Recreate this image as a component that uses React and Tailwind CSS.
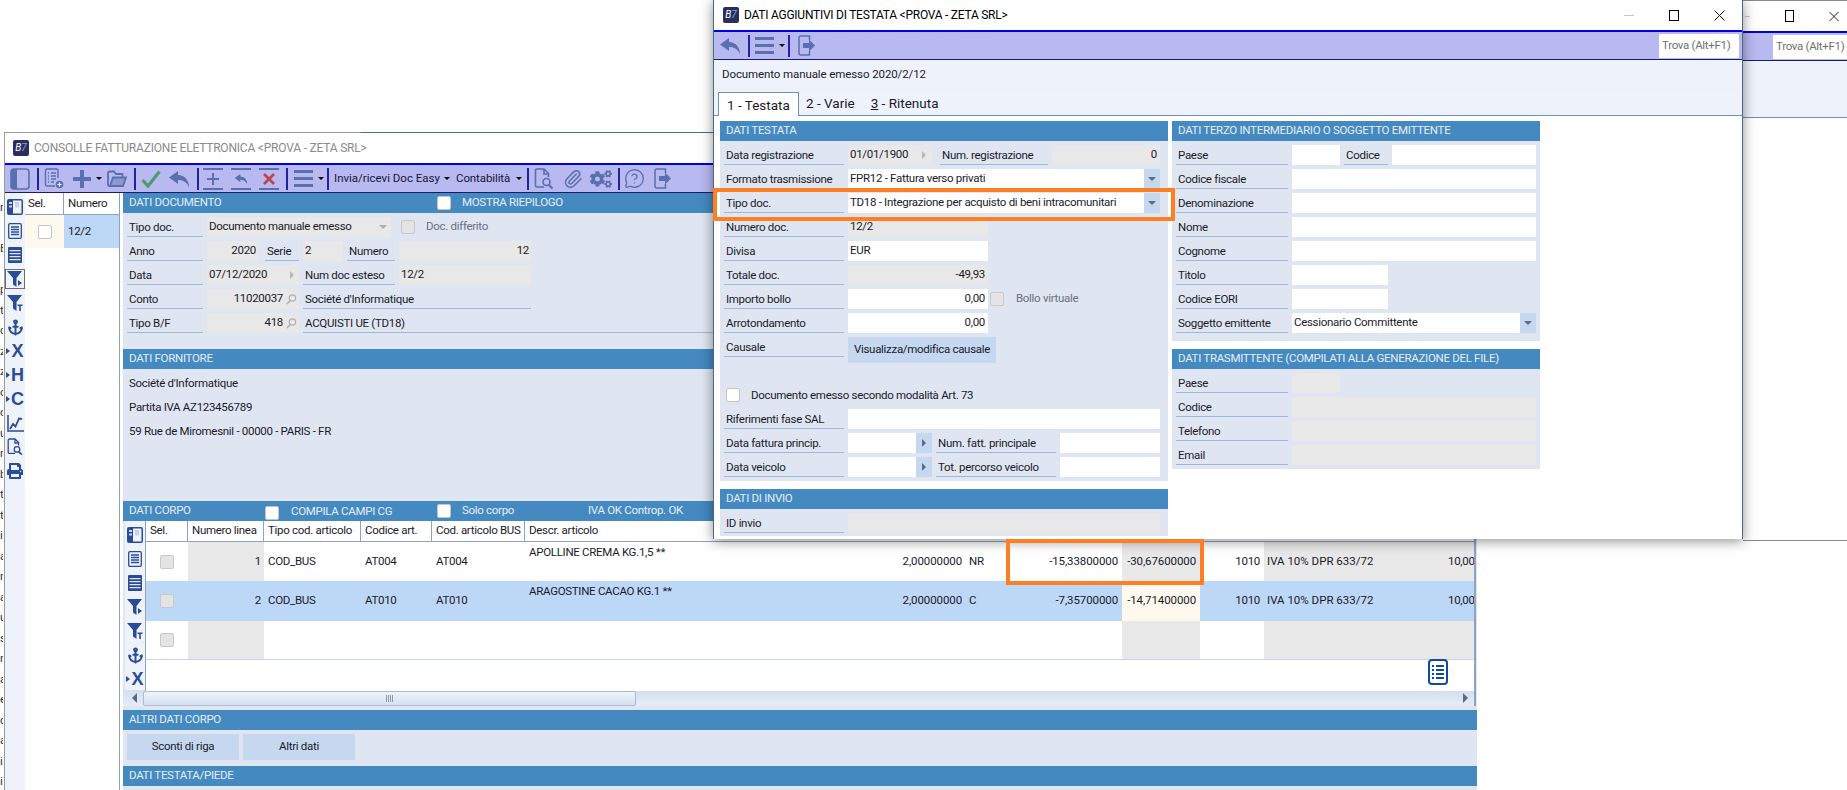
import { Anchor, MessageCircleQuestion, Paperclip } from "lucide-react";
import { FaCogs, FaPrint } from "react-icons/fa";

const leftBits = ["n", "", "E", "", "p", "ti", "c", "z", "z", "o", "c", "u", "n", "b", "t", "t", "i", "a", "n", "a", "u", "s", "n", "a", "e", "d", "a", "i", "i"];

// small icons -------------------------------------------------------------

function Logo() {
	return (
		<div className="flex h-4 w-4 items-center justify-center rounded-[2px] bg-[#2b2d5e] text-[10px] italic leading-none tracking-normal text-white">
			B<span className="text-[#5fb3e8]">7</span>
		</div>
	);
}

function Caret({ className = "" }) {
	return <span className={`block h-0 w-0 shrink-0 border-x-[3px] border-t-[3px] border-x-transparent border-t-black ${className}`} />;
}

function Sep({ className = "" }) {
	return <span className={`h-[22px] w-0.5 shrink-0 bg-[#2222a0] ${className}`} />;
}

function PanelIcon() {
	return (
		<svg viewBox="0 0 20 22" className="h-[22px] w-5" fill="#5a6fad">
			<rect x="1" y="1" width="18" height="20" rx="3" fill="none" stroke="#5a6fad" strokeWidth="1.6" />
			<path d="M3 1h4v20H3a2 2 0 0 1-2-2V3a2 2 0 0 1 2-2z" />
		</svg>
	);
}

function NewListIcon() {
	return (
		<svg viewBox="0 0 20 22" className="h-[22px] w-5" fill="none" stroke="#5a6fad" strokeWidth="1.4">
			<path d="M11 18H3a1.5 1.5 0 0 1-1.500-1.500V2.500A1.500 1.500 0 0 1 3 1h9.500A1.500 1.500 0 0 1 14 2.500V10" />
			<path d="M4 5h1M7 5h5M4 8h1M7 8h5M4 11h1M7 11h5M4 14h1M7 14h3" />
			<circle cx="15.500" cy="16.500" r="3.800" fill="#5a6fad" stroke="none" />
			<path d="M13.500 16.500h4M15.500 14.500v4" stroke="#fff" strokeWidth="1.200" />
		</svg>
	);
}

function PlusIcon() {
	return (
		<svg viewBox="0 0 18 18" className="h-[18px] w-[18px]" fill="#5a6fad">
			<path d="M7 0h4v7h7v4h-7v7H7v-7H0V7h7z" />
		</svg>
	);
}

function FolderIcon() {
	return (
		<svg viewBox="0 0 20 18" className="h-[18px] w-5" fill="none" stroke="#5a6fad" strokeWidth="1.800">
			<path d="M3 16H2.500A1.500 1.500 0 0 1 1 14.500V3a1.500 1.500 0 0 1 1.500-1.500h4.500L9 4h6.500V7" />
			<path d="M3 16 6 7.500h13L16 16z" fill="#5a6fad" fillOpacity="0.45" />
		</svg>
	);
}

function CheckIcon() {
	return (
		<svg viewBox="0 0 20 18" className="h-[18px] w-5" fill="none" stroke="#4d9a6e" strokeWidth="3.200">
			<path d="M1.500 10 7 16 18.500 1.500" />
		</svg>
	);
}

function UndoArrow({ className = "h-[16px] w-5", color = "#5a6fad" }) {
	return (
		<svg viewBox="0 0 20 16" className={className} fill={color}>
			<path d="M9 0 0 6.500 9 13V9c4.500 0 8 1.500 11 7C20 9 15.500 4 9 4z" />
		</svg>
	);
}

function BetweenLines({ children, className = "" }) {
	return (
		<div className={`flex h-[22px] w-5 shrink-0 flex-col justify-between ${className}`}>
			<span className="h-0.5 w-5 bg-[#5a6fad]" />
			<div className="flex items-center justify-center">{children}</div>
			<span className="h-0.5 w-5 bg-[#5a6fad]" />
		</div>
	);
}

function BurgerIcon({ className = "" }) {
	return (
		<div className={`flex h-[17px] w-[19px] shrink-0 flex-col justify-between ${className}`}>
			<span className="h-[3px] bg-[#5a6fad]" />
			<span className="h-[3px] bg-[#5a6fad]" />
			<span className="h-[3px] bg-[#5a6fad]" />
		</div>
	);
}

function DocSearchIcon({ color = "#5a6fad", className = "h-[22px] w-5" }) {
	return (
		<svg viewBox="0 0 20 22" className={className} fill="none" stroke={color} strokeWidth="1.600">
			<path d="M10 19H3a1.500 1.500 0 0 1-1.500-1.500V2.500A1.500 1.500 0 0 1 3 1h7l4.500 4.500V9" />
			<path d="M10 1v5h4.500" />
			<circle cx="12.500" cy="14" r="3.500" />
			<path d="m15 17 3.500 3.500" strokeWidth="2.200" />
		</svg>
	);
}

function ExitIcon({ className = "h-[21px] w-[18px]" }) {
	return (
		<svg viewBox="0 0 18 21" className={className} fill="none" stroke="#5a6fad" strokeWidth="1.500">
			<path d="M11.500 5V1H3A2 2 0 0 0 1 3v15a2 2 0 0 0 2 2h8.500v-4" />
			<path d="M5 8h6V4.500l6 6-6 6V13H5z" fill="#5a6fad" stroke="none" />
		</svg>
	);
}

function BookIcon() {
	return (
		<svg viewBox="0 0 16 16" className="h-4 w-4" fill="#2a4b97">
			<path d="M2 0h12a2 2 0 0 1 2 2v12a2 2 0 0 1-2 2H2a2 2 0 0 1-2-2V2a2 2 0 0 1 2-2zm4 1.500v13h8a.500.500 0 0 0 .500-.500V2a.500.500 0 0 0-.500-.500z" />
			<path d="M2 3h3v2H2zM2 6.500h3v2H2zM8 3h4v5.500H8z" fill="#c9d3ea" />
		</svg>
	);
}

function ListDocIcon() {
	return (
		<svg viewBox="0 0 14 16" className="h-4 w-[14px]" fill="none" stroke="#2a4b97" strokeWidth="1.300">
			<rect x="0.700" y="0.700" width="12.600" height="14.600" rx="1.200" />
			<path d="M3 4h8M3 6.500h8M3 9h8M3 11.500h8" />
		</svg>
	);
}

function TableIcon() {
	return (
		<svg viewBox="0 0 14 16" className="h-4 w-[14px]" fill="#2a4b97">
			<path d="M1 0h12a1 1 0 0 1 1 1v14a1 1 0 0 1-1 1H1a1 1 0 0 1-1-1V1a1 1 0 0 1 1-1z" />
			<path d="M1.500 3h11v1.300h-11zM1.500 6h11v1.300h-11zM1.500 9h11v1.300h-11zM1.500 12h11v1.300h-11z" fill="#dfe6f1" />
		</svg>
	);
}

function FilterIcon({ kind }) {
	return (
		<svg viewBox="0 0 16 16" className="h-4 w-4" fill="#2a4b97">
			<path d="M0 0h15L9.500 7v9L6 13.500V7z" />
			{kind === "arrow" ? <path d="m11 9 4 3-4 3z" /> : <path d="M10.500 9.500h5V11h-1.700v5h-1.600v-5h-1.700z" />}
		</svg>
	);
}

function PickLetter({ letter }) {
	return (
		<div className="flex items-center">
			<span className="mr-px h-0 w-0 border-y-[3px] border-l-[4px] border-y-transparent border-l-[#2a4b97]" />
			<span className="font-['Liberation_Sans'] text-[18px] font-bold leading-none tracking-normal text-[#2a4b97]">{letter}</span>
		</div>
	);
}

function ChartIcon() {
	return (
		<svg viewBox="0 0 17 17" className="h-[17px] w-[17px]" fill="none" stroke="#2a4b97">
			<path d="M1 0v16h16" strokeWidth="1.500" />
			<path d="m3 14 3-5 2.500 2.500L12 3.500l3 .500" strokeWidth="1.800" />
		</svg>
	);
}

function Loupe() {
	return (
		<svg viewBox="0 0 11 11" className="h-[11px] w-[11px]" fill="none" stroke="#b0b0b0" strokeWidth="1.200">
			<circle cx="6.500" cy="4" r="3.200" />
			<path d="M4 6.500 1 10" strokeWidth="1.600" />
		</svg>
	);
}

function SmallArrow({ color = "#a8a8a8" }) {
	return (
		<span className="h-0 w-0 border-y-[4px] border-l-[4px] border-y-transparent" style={{ borderLeftColor: color }} />
	);
}

// form parts ---------------------------------------------------------------

function SectionHeader({ children, className = "" }) {
	return (
		<div className={`flex h-5 shrink-0 items-center bg-[#448ac0] pl-[6px] text-[#e6edf6] ${className}`}>
			{children}
		</div>
	);
}

function Label({ children, className = "" }) {
	return (
		<div className={`flex h-5 shrink-0 items-center truncate border-b border-[#9db8da] pl-[2px] pt-[2px] ${className}`}>
			{children}
		</div>
	);
}

function Input({ children, gray, right, className = "" }) {
	return (
		<div
			className={`flex h-5 shrink-0 items-center px-[2px] ${gray ? "bg-[#e8e8e8]" : "bg-white"} ${right ? "justify-end" : ""} ${className}`}>
			{children}
		</div>
	);
}

function DropDown({ children, className = "" }) {
	return (
		<div className={`flex h-5 shrink-0 items-center justify-between bg-white pl-[2px] ${className}`}>
			<span>{children}</span>
			<span className="flex h-5 w-4 items-center justify-center bg-[#c5d8f0]">
				<span className="h-0 w-0 border-x-[4px] border-t-[4px] border-x-transparent border-t-[#5a6a8a]" />
			</span>
		</div>
	);
}

function Box({ className = "" }) {
	return <span className={`h-[14px] w-[14px] shrink-0 rounded-[2px] border border-[#c4c4c4] bg-white ${className}`} />;
}

function GrayBox({ className = "" }) {
	return <span className={`h-[14px] w-[14px] shrink-0 rounded-[2px] border border-[#c9c9c9] bg-[#e4e4e4] ${className}`} />;
}

function Row({ children }) {
	return <div className="flex h-5 items-center gap-1">{children}</div>;
}

function WinButtons() {
	return (
		<div className="flex items-center">
			<span className="h-px w-[10px] bg-[#c8c8c8]" />
			<span className="ml-[35px] h-[11px] w-[10px] border border-black" />
			<svg viewBox="0 0 11 11" className="ml-[35px] h-[11px] w-[11px]" stroke="#111" strokeWidth="1" fill="none">
				<path d="M.5.5l10 10M10.500.5l-10 10" />
			</svg>
		</div>
	);
}

function Trova({ className = "" }) {
	return (
		<div className={`flex h-6 items-center bg-white pl-[3px] text-[#707070] ${className}`}>Trova (Alt+F1)</div>
	);
}

// main window ---------------------------------------------------------------

function MainToolbar() {
	return (
		<div className="flex h-[30px] shrink-0 items-center border-b border-t-2 border-b-[#1a1a6e] border-t-[#0000e6] bg-[#b9b9f1] pl-[5px]">
			<PanelIcon />
			<Sep className="ml-[7px]" />
			<span className="ml-[5px]"><NewListIcon /></span>
			<span className="ml-[9px]"><PlusIcon /></span>
			<Caret className="ml-[5px]" />
			<span className="ml-[5px]"><FolderIcon /></span>
			<Sep className="ml-[7px]" />
			<span className="ml-[5px]"><CheckIcon /></span>
			<span className="ml-[8px]"><UndoArrow /></span>
			<Sep className="ml-[8px]" />
			<BetweenLines className="ml-1"><PlusIcon2 /></BetweenLines>
			<BetweenLines className="ml-2"><UndoArrow className="h-[10px] w-[14px]" /></BetweenLines>
			<BetweenLines className="ml-2"><XIcon /></BetweenLines>
			<Sep className="ml-[7px]" />
			<BurgerIcon className="ml-[6px]" />
			<Caret className="ml-[5px]" />
			<Sep className="ml-[3px]" />
			<span className="ml-[5px] w-[108px] tracking-normal text-[#15153a]">Invia/ricevi Doc Easy</span>
			<Caret className="ml-[2px]" />
			<span className="ml-[6px] w-[57px] tracking-[-0.1px] text-[#15153a]">Contabilità</span>
			<Caret className="ml-[3px]" />
			<Sep className="ml-[5px]" />
			<span className="ml-[5px]"><DocSearchIcon /></span>
			<span className="ml-[9px]"><Paperclip size={20} color="#5a6fad" strokeWidth={1.800} /></span>
			<span className="ml-[7px]"><FaCogs size={22} color="#5a6fad" /></span>
			<Sep className="ml-[6px]" />
			<span className="ml-1"><MessageCircleQuestion size={21} color="#5a6fad" strokeWidth={1.500} /></span>
			<span className="ml-[9px]"><ExitIcon /></span>
		</div>
	);
}

function PlusIcon2() {
	return (
		<svg viewBox="0 0 12 12" className="h-3 w-3" fill="#5a6fad">
			<path d="M5 0h2v5h5v2H7v5H5V7H0V5h5z" />
		</svg>
	);
}

function XIcon() {
	return (
		<svg viewBox="0 0 12 12" className="h-3 w-3" fill="none" stroke="#b8484e" strokeWidth="2.800">
			<path d="m1 1 10 10M11 1 1 11" />
		</svg>
	);
}

function MainSidebar() {
	const items = [
		<BookIcon />,
		<ListDocIcon />,
		<TableIcon />,
		<FilterIcon kind="arrow" />,
		<FilterIcon kind="t" />,
		<Anchor size={17} color="#2a4b97" strokeWidth={2.800} />,
		<PickLetter letter="X" />,
		<PickLetter letter="H" />,
		<PickLetter letter="C" />,
		<ChartIcon />,
		<DocSearchIcon color="#2a4b97" className="h-[18px] w-4" />,
		<FaPrint size={16} color="#2a4b97" />,
	];
	return (
		<div className="flex w-5 shrink-0 flex-col bg-[#eef2fa] pt-[2px]">
			{items.map((icon, i) => (
				<div key={i} className="flex h-6 shrink-0 items-center justify-center">
					<div className={`flex h-5 w-5 items-center justify-center ${i === 3 ? "border border-[#6b6b6b]" : ""}`}>
						{icon}
					</div>
				</div>
			))}
		</div>
	);
}

function DocList() {
	return (
		<div className="w-[95px] shrink-0 border-r border-[#8fa3bd] bg-white">
			<div className="flex h-[22px] border-b border-[#8fa3bd]">
				<div className="w-[39px] border-r border-[#8fa3bd] pl-[3px] pt-[2px]">Sel.</div>
				<div className="flex-1 pl-1 pt-[2px]">Numero</div>
			</div>
			<div className="flex h-[33px]">
				<div className="flex w-[39px] items-center justify-center bg-[#fdf9ef]">
					<Box />
				</div>
				<div className="flex flex-1 items-center bg-[#bdd8f7] pl-1">12/2</div>
			</div>
		</div>
	);
}

const gridRows = [
	{ n: "1", sel: false, code: "AT004", desc: "APOLLINE CREMA KG.1,5 **", um: "NR", price: "-15,33800000", tot: "-30,67600000" },
	{ n: "2", sel: true, code: "AT010", desc: "ARAGOSTINE CACAO KG.1 **", um: "C", price: "-7,35700000", tot: "-14,71400000" },
];

function GridRow({ r }) {
	const bg = r.sel ? "bg-[#bdd8f7]" : "bg-white";
	const grayOrBlue = r.sel ? "" : "bg-[#e8e8e8]";
	return (
		<div className={`flex ${r.sel ? "h-10" : "h-[39px]"} items-center ${bg}`}>
			<div className="flex h-full w-[42px] shrink-0 items-center justify-center pr-px"><GrayBox /></div>
			<div className={`flex h-full w-[76px] shrink-0 items-center justify-end pr-[3px] ${grayOrBlue}`}>{r.n}</div>
			<div className="w-[97px] shrink-0 pl-1">COD_BUS</div>
			<div className="w-[71px] shrink-0 pl-1">{r.code}</div>
			<div className="w-[93px] shrink-0 pl-1">{r.code}</div>
			<div className="h-full w-[373px] shrink-0 pl-1 pt-[1px] leading-[18px]">{r.desc}</div>
			<div className="w-[64px] shrink-0 text-right tracking-[-0.1px]">2,00000000</div>
			<div className="w-[40px] shrink-0 pl-[7px]">{r.um}</div>
			<div className="w-[120px] shrink-0 pr-[4px] text-right tracking-[-0.1px]">{r.price}</div>
			<div className={`flex h-full w-[78px] shrink-0 items-center justify-end pr-1 tracking-[-0.1px] ${r.sel ? "bg-[#fdf9ef]" : "bg-[#e8e8e8]"}`}>{r.tot}</div>
			<div className="w-[64px] shrink-0 pr-[4px] text-right">1010</div>
			<div className={`flex h-full min-w-0 flex-1 items-center justify-between overflow-hidden ${grayOrBlue} pl-[3px]`}>
				<span className="tracking-normal">IVA 10% DPR 633/72</span>
				<span className="w-[26px] shrink-0 overflow-hidden">10,00</span>
			</div>
		</div>
	);
}

function GridBody() {
	const heads = [
		["Sel.", "w-[42px]"],
		["Numero linea", "w-[76px]"],
		["Tipo cod. articolo", "w-[97px]"],
		["Codice art.", "w-[71px]"],
		["Cod. articolo BUS", "w-[93px]"],
		["Descr. articolo", "flex-1"],
	];
	const side = [
		<BookIcon />,
		<ListDocIcon />,
		<TableIcon />,
		<FilterIcon kind="arrow" />,
		<FilterIcon kind="t" />,
		<Anchor size={17} color="#2a4b97" strokeWidth={2.800} />,
		<PickLetter letter="X" />,
	];
	return (
		<div className="flex h-[170px] shrink-0 pl-[2px] pr-px">
			<div className="flex w-5 shrink-0 flex-col bg-[#eef2fa] pt-[2px]">
				{side.map((icon, i) => (
					<div key={i} className="flex h-6 shrink-0 items-center justify-center">{icon}</div>
				))}
			</div>
			<div className="relative min-w-0 flex-1 border-l border-r-2 border-l-[#8fa3bd] border-r-[#8da4c0] bg-white">
				<div className="flex h-[21px] border-b border-[#8fa3bd]">
					{heads.map(([title, w]) => (
						<div key={title} className={`${w} shrink-0 border-r border-[#8fa3bd] pl-1 pt-[1px] last:border-r-0`}>{title}</div>
					))}
				</div>
				{gridRows.map((r) => (
					<GridRow key={r.n} r={r} />
				))}
				<div className="flex h-[39px] border-b border-[#bdd8f7]">
					<div className="flex w-[42px] shrink-0 items-center justify-center pr-px"><GrayBox /></div>
					<div className="w-[76px] shrink-0 bg-[#e8e8e8]" />
					<div className="w-[858px] shrink-0" />
					<div className="w-[78px] shrink-0 bg-[#e8e8e8]" />
					<div className="w-[64px] shrink-0" />
					<div className="flex-1 bg-[#e8e8e8]" />
				</div>
				<svg viewBox="0 0 20 26" className="absolute bottom-[6px] right-[26px] h-[26px] w-5" fill="none" stroke="#0e4b9a">
					<rect x="1" y="1" width="18" height="24" rx="3" strokeWidth="2" />
					<path d="M4 7h2M8 7h8M4 11h2M8 11h8M4 15h2M8 15h8M4 19h2M8 19h8" strokeWidth="2" />
				</svg>
			</div>
		</div>
	);
}

function Scrollbar() {
	return (
		<div className="-mt-px mr-px flex h-4 shrink-0 items-center border-r-2 border-r-[#8da4c0] bg-gradient-to-b from-[#d3dfee] to-[#e6edf6] pl-[9px] pr-[6px]">
			<span className="h-0 w-0 border-y-[5px] border-r-[5px] border-y-transparent border-r-[#5a6a88]" />
			<div className="ml-[6px] flex h-[15px] w-[493px] items-center justify-center gap-px rounded-[2px] border border-[#a8bcd8] bg-gradient-to-b from-[#eef3fa] to-[#d5e0ef]">
				<span className="h-[7px] w-px bg-[#8b98ab]" />
				<span className="h-[7px] w-px bg-[#8b98ab]" />
				<span className="h-[7px] w-px bg-[#8b98ab]" />
				<span className="h-[7px] w-px bg-[#8b98ab]" />
			</div>
			<span className="ml-auto h-0 w-0 border-y-[5px] border-l-[5px] border-y-transparent border-l-[#5a6a88]" />
		</div>
	);
}

function MainContent() {
	return (
		<div className="flex min-w-0 flex-1 flex-col bg-[#dfe6f1]">
			<SectionHeader>
				<span className="w-[308px]">DATI DOCUMENTO</span>
				<Box />
				<span className="ml-[11px]">MOSTRA RIEPILOGO</span>
			</SectionHeader>
			<div className="flex h-[136px] shrink-0 flex-col gap-1 pl-1 pt-1">
				<Row>
					<Label className="w-[76px]">Tipo doc.</Label>
					<div className="flex h-5 w-[184px] items-center justify-between bg-[#e8e8e8] pl-[2px] pr-[4px]">
						<span>Documento manuale emesso</span>
						<span className="h-0 w-0 border-x-[4px] border-t-[4px] border-x-transparent border-t-[#b0b0b0]" />
					</div>
					<GrayBox className="ml-[6px]" />
					<span className="ml-[7px] text-[#6b7080]">Doc. differito</span>
				</Row>
				<Row>
					<Label className="w-[76px]">Anno</Label>
					<Input gray right className="w-[51px]">2020</Input>
					<Label className="ml-[3px] w-[34px]">Serie</Label>
					<Input gray className="w-[40px]">2</Input>
					<Label className="w-[48px]">Numero</Label>
					<Input gray right className="w-[132px]">12</Input>
				</Row>
				<Row>
					<Label className="w-[76px]">Data</Label>
					<Input gray className="w-[92px] justify-between pr-[5px]">
						<span>07/12/2020</span>
						<SmallArrow color="#b8b8b8" />
					</Input>
					<Label className="w-[92px]">Num doc esteso</Label>
					<Input gray className="w-[132px]">12/2</Input>
				</Row>
				<Row>
					<Label className="w-[76px]">Conto</Label>
					<Input gray right className="w-[92px] gap-[3px]">
						<span>11020037</span>
						<Loupe />
					</Input>
					<Label className="w-[228px]">Société d'Informatique</Label>
				</Row>
				<Row>
					<Label className="w-[76px]">Tipo B/F</Label>
					<Input gray right className="w-[92px] gap-[3px]">
						<span>418</span>
						<Loupe />
					</Input>
					<Label className="flex-1">ACQUISTI UE (TD18)</Label>
				</Row>
			</div>
			<SectionHeader>DATI FORNITORE</SectionHeader>
			<div className="flex h-[132px] shrink-0 flex-col gap-[7px] pl-[6px] pt-[6px]">
				<div className="h-[17px]">Société d'Informatique</div>
				<div className="h-[17px]">Partita IVA AZ123456789</div>
				<div className="h-[17px]">59 Rue de Miromesnil - 00000 - PARIS - FR</div>
			</div>
			<SectionHeader>
				<span className="w-[136px]">DATI CORPO</span>
				<Box className="mt-[4px]" />
				<span className="ml-[12px] mt-[1px] w-[146px]">COMPILA CAMPI CG</span>
				<Box className="mb-[1px]" />
				<span className="ml-[11px] w-[126px]">Solo corpo</span>
				<span>IVA OK Controp. OK</span>
			</SectionHeader>
			<GridBody />
			<Scrollbar />
			<div className="h-1 shrink-0" />
			<SectionHeader>ALTRI DATI CORPO</SectionHeader>
			<div className="flex h-9 shrink-0 gap-1 pl-1 pt-1">
				<div className="flex h-[26px] w-[112px] items-center justify-center bg-[#c5d8f0]">Sconti di riga</div>
				<div className="flex h-[26px] w-[112px] items-center justify-center bg-[#c5d8f0]">Altri dati</div>
			</div>
			<SectionHeader>DATI TESTATA/PIEDE</SectionHeader>
		</div>
	);
}

function MainWindow() {
	return (
		<div className="absolute left-[4px] top-[132px] flex h-[658px] w-[1473px] flex-col overflow-hidden border-l border-[#9a9a9a] bg-white">
			<div className="flex h-px shrink-0">
				<span className="w-[356px] bg-[#9a9a9a]" />
				<span className="flex-1 bg-[#4a6a8a]" />
			</div>
			<div className="flex h-[30px] shrink-0 items-center gap-[5px] pl-[8px] text-[12px] tracking-[-0.2px] text-[#8a8a8a]">
				<Logo />
				<span>CONSOLLE FATTURAZIONE ELETTRONICA &lt;PROVA - ZETA SRL&gt;</span>
			</div>
			<MainToolbar />
			<div className="flex min-h-0 flex-1">
				<MainSidebar />
				<DocList />
				<div className="w-[3px] shrink-0" />
				<MainContent />
			</div>
		</div>
	);
}

// front window ----------------------------------------------------------------

function TestataPanel() {
	return (
		<div className="flex w-[448px] shrink-0 flex-col">
			<SectionHeader>DATI TESTATA</SectionHeader>
			<div className="flex h-[340px] shrink-0 flex-col gap-1 bg-[#dfe6f1] pl-1 pt-1">
				<Row>
					<Label className="w-[120px]">Data registrazione</Label>
					<Input gray className="w-[84px] justify-between pr-[6px]">
						<span>01/01/1900</span>
						<SmallArrow color="#b8b8b8" />
					</Input>
					<Label className="ml-1 w-[108px]">Num. registrazione</Label>
					<Input gray right className="w-[108px] pr-[3px]">0</Input>
				</Row>
				<Row>
					<Label className="w-[120px]">Formato trasmissione</Label>
					<DropDown className="w-[312px]">FPR12 - Fattura verso privati</DropDown>
				</Row>
				<Row>
					<Label className="w-[120px]">Tipo doc.</Label>
					<DropDown className="w-[312px]">TD18 - Integrazione per acquisto di beni intracomunitari</DropDown>
				</Row>
				<Row>
					<Label className="w-[120px]">Numero doc.</Label>
					<Input gray className="w-[140px]">12/2</Input>
				</Row>
				<Row>
					<Label className="w-[120px]">Divisa</Label>
					<Input className="w-[140px]">EUR</Input>
				</Row>
				<Row>
					<Label className="w-[120px]">Totale doc.</Label>
					<Input gray right className="w-[140px] pr-[3px]">-49,93</Input>
				</Row>
				<Row>
					<Label className="w-[120px]">Importo bollo</Label>
					<Input right className="w-[140px] pr-[3px]">0,00</Input>
					<GrayBox className="-ml-[2px]" />
					<span className="ml-2 text-[#6b7080]">Bollo virtuale</span>
				</Row>
				<Row>
					<Label className="w-[120px]">Arrotondamento</Label>
					<Input right className="w-[140px] pr-[3px]">0,00</Input>
				</Row>
				<div className="flex h-[26px] items-start gap-1">
					<Label className="w-[120px]">Causale</Label>
					<div className="flex h-[26px] w-[148px] items-center justify-center bg-[#c5d8f0]">Visualizza/modifica causale</div>
				</div>
				<div className="mt-[18px] flex h-5 items-start pl-[2px]">
					<Box className="mt-[3px]" />
					<span className="ml-[11px] mt-[2px]">Documento emesso secondo modalità Art. 73</span>
				</div>
				<Row>
					<Label className="w-[120px]">Riferimenti fase SAL</Label>
					<Input className="w-[312px]" />
				</Row>
				<Row>
					<Label className="w-[120px]">Data fattura princip.</Label>
					<div className="flex h-5 w-[84px] justify-end bg-white">
						<span className="flex h-5 w-4 items-center justify-center bg-[#c5d8f0]"><SmallArrow color="#5a6a88" /></span>
					</div>
					<Label className="w-[120px]">Num. fatt. principale</Label>
					<Input className="w-[100px]" />
				</Row>
				<Row>
					<Label className="w-[120px]">Data veicolo</Label>
					<div className="flex h-5 w-[84px] justify-end bg-white">
						<span className="flex h-5 w-4 items-center justify-center bg-[#c5d8f0]"><SmallArrow color="#5a6a88" /></span>
					</div>
					<Label className="w-[120px]">Tot. percorso veicolo</Label>
					<Input className="w-[100px]" />
				</Row>
			</div>
			<div className="h-2 shrink-0" />
			<SectionHeader>DATI DI INVIO</SectionHeader>
			<div className="flex h-[27px] gap-1 bg-[#dfe6f1] pl-1 pt-1">
				<Label className="w-[120px]">ID invio</Label>
				<Input gray className="w-[312px]" />
			</div>
		</div>
	);
}

function TerzoPanel() {
	const wide = ["Codice fiscale", "Denominazione", "Nome", "Cognome"];
	return (
		<div className="flex w-[368px] shrink-0 flex-col">
			<SectionHeader>DATI TERZO INTERMEDIARIO O SOGGETTO EMITTENTE</SectionHeader>
			<div className="flex h-[200px] shrink-0 flex-col gap-1 bg-[#dfe6f1] pl-1 pt-1">
				<Row>
					<Label className="w-[112px]">Paese</Label>
					<Input className="w-[48px]" />
					<Label className="w-[44px]">Codice</Label>
					<Input className="w-[144px]" />
				</Row>
				{wide.map((t) => (
					<Row key={t}>
						<Label className="w-[112px]">{t}</Label>
						<Input className="w-[244px]" />
					</Row>
				))}
				<Row>
					<Label className="w-[112px]">Titolo</Label>
					<Input className="w-[96px]" />
				</Row>
				<Row>
					<Label className="w-[112px]">Codice EORI</Label>
					<Input className="w-[96px]" />
				</Row>
				<Row>
					<Label className="w-[112px]">Soggetto emittente</Label>
					<DropDown className="w-[244px]">Cessionario Committente</DropDown>
				</Row>
			</div>
			<div className="h-2 shrink-0" />
			<SectionHeader>DATI TRASMITTENTE (COMPILATI ALLA GENERAZIONE DEL FILE)</SectionHeader>
			<div className="flex h-[100px] shrink-0 flex-col gap-1 bg-[#dfe6f1] pl-1 pt-1">
				<Row>
					<Label className="w-[112px]">Paese</Label>
					<Input gray className="w-[48px]" />
				</Row>
				{["Codice", "Telefono", "Email"].map((t) => (
					<Row key={t}>
						<Label className="w-[112px]">{t}</Label>
						<Input gray className="w-[244px]" />
					</Row>
				))}
			</div>
		</div>
	);
}

function FrontWindow() {
	return (
		<div className="absolute left-[713px] top-0 flex h-[539px] w-[1030px] flex-col border-x border-x-[#4a6a8a] bg-white shadow-[0_2px_12px_rgba(0,0,0,0.45)]">
			<div className="flex h-[30px] shrink-0 items-center justify-between pl-[9px] pr-[17px] text-[12px] tracking-[-0.25px] text-black">
				<div className="flex items-center gap-[5px]">
					<Logo />
					<span>DATI AGGIUNTIVI DI TESTATA &lt;PROVA - ZETA SRL&gt;</span>
				</div>
				<WinButtons />
			</div>
			<div className="flex h-[30px] shrink-0 items-center border-b border-t-2 border-b-[#1a1a6e] border-t-[#0000e6] bg-[#b9b9f1] pl-[6px]">
				<UndoArrow />
				<Sep className="ml-[8px]" />
				<BurgerIcon className="ml-[5px]" />
				<Caret className="ml-[5px]" />
				<Sep className="ml-[3px]" />
				<span className="ml-[8px]"><ExitIcon /></span>
				<Trova className="ml-auto mr-[3px] w-[80px]" />
			</div>
			<div className="flex h-[28px] shrink-0 items-center bg-[#eef2fa] pl-[8px] pt-[2px] tracking-[-0.1px]">Documento manuale emesso 2020/2/12</div>
			<div className="h-px shrink-0 bg-[#f0f0f0]" />
			<div className="flex h-[27px] shrink-0 items-end border-b border-[#6f8fb5] bg-[#eef2fa] pl-[4px] text-[13.500px] tracking-normal">
				<div className="relative -mb-px flex h-6 w-[81px] items-center border-x border-t border-[#6f8fb5] bg-white pl-[8px] pt-px">1 - Testata</div>
				<div className="flex h-6 items-center pl-[7px] pt-px">2 - Varie</div>
				<div className="flex h-6 items-center pl-4 pt-px"><u>3</u>&nbsp;- Ritenuta</div>
			</div>
			<div className="flex min-h-0 flex-1 gap-1 pl-[6px] pt-[5px]">
				<TestataPanel />
				<TerzoPanel />
			</div>
		</div>
	);
}

// window peeking out on the right ----------------------------------------------

function RightWindow() {
	return (
		<div className="absolute left-[1743px] top-0 flex h-[541px] w-[104px] flex-col border-y border-[#8a8a8a] bg-white">
			<div className="flex h-[30px] shrink-0 items-center justify-between pl-[2px] pr-[8px]">
				<span className="h-px w-[5px] bg-[#c8c8c8]" />
				<span className="ml-[35px] h-[12px] w-[10px] border border-black" />
				<svg viewBox="0 0 11 11" className="ml-[35px] h-[11px] w-[11px]" stroke="#111" strokeWidth="1" fill="none">
					<path d="M.5.5l10 10M10.500.5l-10 10" />
				</svg>
			</div>
			<div className="flex h-[30px] shrink-0 items-center border-b border-t-2 border-b-[#1a1a6e] border-t-[#0000e6] bg-[#b9b9f1] pl-[30px]">
				<Trova className="flex-1" />
			</div>
			<div className="h-[57px] shrink-0 border-b border-[#6f8fb5] bg-[#eef2fa]" />
		</div>
	);
}

function LeftFragments() {
	return (
		<div className="absolute left-0 top-[197px] flex w-[3px] flex-col overflow-hidden text-[#333]">
			{leftBits.map((b, i) => (
				<div key={i} className="h-[20.500px] shrink-0 leading-[20px]">{b}</div>
			))}
		</div>
	);
}

function Callout({ className }) {
	return <div className={`absolute border-[4px] border-[#fd7e23] ${className}`} />;
}

export default function App() {
	return (
		<div className="relative h-[790px] w-[1847px] overflow-hidden whitespace-nowrap bg-white font-['Roboto','Noto_Sans',sans-serif] text-[11.500px] tracking-[-0.3px] text-[#1a1a2a]">
			<LeftFragments />
			<MainWindow />
			<RightWindow />
			<FrontWindow />
			<Callout className="left-[713px] top-[188px] h-[33px] w-[462px]" />
			<Callout className="left-[1006px] top-[539px] h-[46px] w-[198px]" />
		</div>
	);
}
